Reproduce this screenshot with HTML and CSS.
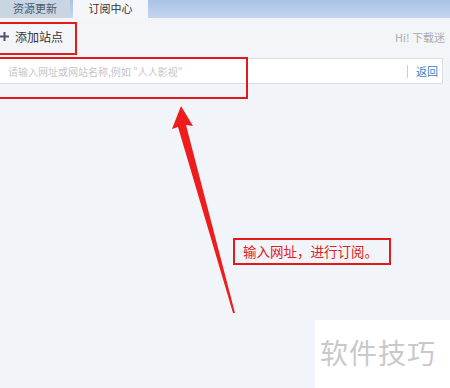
FILE: index.html
```html
<!DOCTYPE html>
<html lang="zh-CN">
<head>
    <meta charset="UTF-8">
    <title>订阅中心</title>
    <link rel="stylesheet" href="styles.css">
</head>
<body>
    <div class="tabs">
        <div class="tab">资源更新</div>
        <div class="tab active">订阅中心</div>
    </div>

    <div class="toolbar">
        <div class="add-site">
            <svg class="plus" width="9" height="9" viewBox="0 0 9 9">
                <path d="M4.5 0V9M0 4.5H9" stroke="#4a5665" stroke-width="2"/>
            </svg>
            添加站点
        </div>
        <div class="hello">Hi! 下载迷</div>
    </div>

    <div class="search-row">
        <div class="search-box">
            <span class="placeholder">请输入网址或网站名称,例如 "人人影视"</span>
            <span class="back">返回</span>
        </div>
    </div>

    <!-- annotations -->
    <div class="mark mark-add"></div>
    <div class="mark mark-input"></div>
    <svg class="arrow" width="450" height="388" viewBox="0 0 450 388">
        <polygon points="181,106 172,129 178,127 233,313 235,313 186,125 193,126" fill="#ee1c1c"/>
    </svg>
    <div class="note">输入网址，进行订阅。</div>

    <div class="watermark">软件技巧</div>
</body>
</html>
```

FILE: styles.css
```css
body {
    margin: 0;
    width: 450px;
    height: 388px;
    overflow: hidden;
    background-color: #f1f4f8;
    font-family: "Noto Sans CJK SC", "Liberation Sans", sans-serif;
    font-size: 12px;
    color: #333;
    position: relative;
}
.tabs {
    height: 18px;
    display: flex;
    background: linear-gradient(#a9c3e6, #c3d6ef);
}
.tab {
    width: 70px;
    margin-right: 3px;
    line-height: 16px;
    text-align: center;
    color: #4b5a6b;
    background-color: #c9d5e3;
    font-size: 11px;
}
.tab.active {
    width: 75px;
    color: #333;
    background-color: #f4f6f9;
}
.toolbar {
    height: 40px;
    display: flex;
    justify-content: space-between;
    align-items: center;
    padding: 0 5px 0 0;
    background-color: #f3f5f8;
}
.add-site {
    display: flex;
    align-items: center;
    font-size: 12px;
    color: #333;
    margin-top: -4px;
}
.plus {
    margin-left: 0;
    margin-right: 6px;
}
.hello {
    color: #a8adb3;
    font-size: 11px;
    margin-top: -3px;
}
.search-row {
    padding: 0 7px 0 0;
}
.search-box {
    height: 24px;
    display: flex;
    align-items: center;
    justify-content: space-between;
    background-color: #fff;
    border: 1px solid #d9dee5;
    border-left: none;
    font-size: 10px;
}
.placeholder {
    color: #c4c6c9;
    margin-left: 8px;
}
.back {
    color: #3b7ac4;
    font-size: 11px;
    border-left: 1px solid #c7ccd2;
    padding-left: 8px;
    margin-right: 4px;
    line-height: 13px;
}
.mark {
    position: absolute;
    border: 2px solid #e11a1a;
}
.mark-add {
    left: -4px;
    top: 22px;
    width: 77px;
    height: 29px;
}
.mark-input {
    left: -4px;
    top: 57px;
    width: 248px;
    height: 38px;
}
.arrow {
    position: absolute;
    left: 0;
    top: 0;
}
.note {
    position: absolute;
    left: 233px;
    top: 238px;
    width: 146px;
    height: 23px;
    padding-left: 8px;
    line-height: 23px;
    border: 2px solid #e11a1a;
    color: #e02020;
    font-size: 13.5px;
    white-space: nowrap;
}
.watermark {
    position: absolute;
    left: 315px;
    top: 320px;
    width: 135px;
    height: 68px;
    padding-left: 5px;
    box-sizing: border-box;
    background-color: #fff;
    color: #c9c9c9;
    font-size: 28px;
    line-height: 64px;
    letter-spacing: 1px;
}
```
